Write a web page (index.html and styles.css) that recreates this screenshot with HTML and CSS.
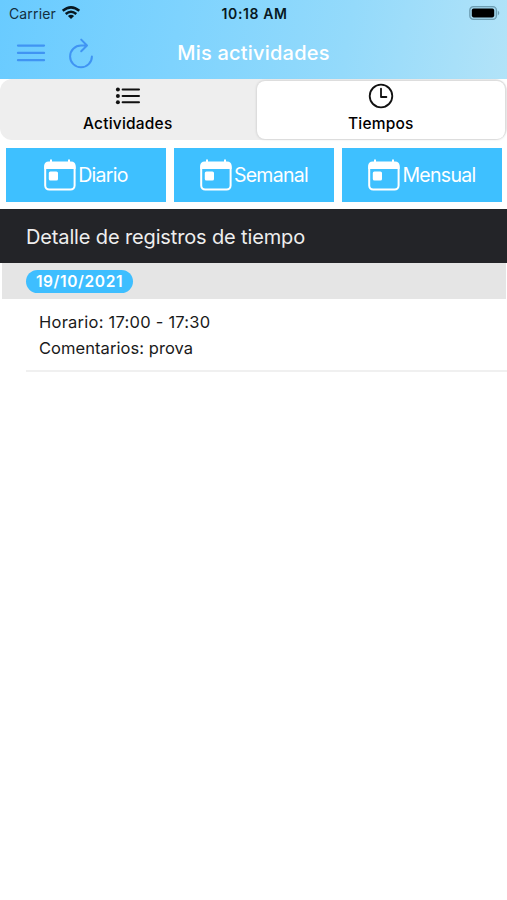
FILE: index.html
```html
<!DOCTYPE html>
<html lang="es">
<head>
<meta charset="utf-8">
<title>Mis actividades</title>
<link rel="stylesheet" href="styles.css">
</head>
<body>
<header class="header">
  <div class="status">
    <div class="carrier"><span>Carrier</span>
      <svg width="20" height="16" viewBox="0 0 20 16" fill="none" stroke="#081821" stroke-width="2.5"><path d="M1.7 5.8Q10 -1.1 18.3 5.8M4.7 9Q10 4.6 15.3 9"/><path d="M6.9 11Q10 8.6 13.1 11L10 14.1Z" fill="#081821" stroke="none"/></svg>
    </div>
    <span class="clock">10:18 AM</span>
    <svg class="battery" width="31" height="14" viewBox="0 0 31 14"><rect x=".8" y=".7" width="26.6" height="12.6" rx="3.6" fill="#a3d7ee" stroke="#6d9eb3" stroke-width="1.3"/><rect x="2.8" y="2.6" width="22.4" height="8.8" rx="1.8" fill="#000"/><path d="M28.8 4.6Q31.8 7 28.8 9.4Z" fill="#6d9eb3"/></svg>
  </div>
  <div class="nav">
    <div class="tools">
      <svg width="30" height="20" viewBox="0 0 30 20" stroke="#4094f3" stroke-width="2.3" stroke-linecap="round"><path d="M2 2.6H28M2 9.9H28M2 17.2H28"/></svg>
      <svg width="26" height="32" viewBox="0 0 26 32" fill="none" stroke="#4094f3" stroke-width="2" stroke-linecap="round" stroke-linejoin="round"><path d="M18.6 8.5H13A10.9 10.9 0 1 0 23.9 19.4M13.2 2.6L19 8.5L13.2 14.2"/></svg>
    </div>
    <h1 class="title">Mis actividades</h1>
  </div>
</header>
<nav class="tabs">
  <div class="tab">
    <svg width="26" height="26" viewBox="0 0 26 26" stroke="#111" stroke-width="2" stroke-linecap="round"><path d="M7.6 6.6H24M7.6 12.9H24M7.6 19.2H24"/><g fill="#111" stroke="none"><circle cx="2.9" cy="6.6" r="2"/><circle cx="2.9" cy="12.9" r="2"/><circle cx="2.9" cy="19.2" r="2"/></g></svg>
    <span class="label">Actividades</span>
  </div>
  <div class="tab active">
    <svg width="26" height="26" viewBox="0 0 26 26" fill="none" stroke="#111" stroke-width="1.8" stroke-linecap="round" stroke-linejoin="round"><circle cx="13" cy="13" r="11.3"/><path d="M13 5.7V14H18.4"/></svg>
    <span class="label">Tiempos</span>
  </div>
</nav>
<svg class="defs" width="0" height="0"><symbol id="cal" viewBox="0 0 32 32"><rect x="1.2" y="4.2" width="29.4" height="26.4" rx="4" fill="none" stroke="#fff" stroke-width="2"/><path d="M.2 10V7Q.2 2.4 4.8 2.4H6V.6H8V2.4H24V.6H26V2.4H27Q31.6 2.4 31.6 7V10Z" fill="#fff"/><rect x="4.8" y="12.4" width="9.2" height="9.2" rx="1.6" fill="#fff"/></symbol></svg>
<div class="buttons">
  <button class="btn"><svg width="32" height="32"><use href="#cal"/></svg><span>Diario</span></button>
  <button class="btn"><svg width="32" height="32"><use href="#cal"/></svg><span>Semanal</span></button>
  <button class="btn"><svg width="32" height="32"><use href="#cal"/></svg><span>Mensual</span></button>
</div>
<h2 class="heading">Detalle de registros de tiempo</h2>
<div class="date-row"><span class="badge">19/10/2021</span></div>
<div class="entry">
  <p class="hours">Horario: 17:00 - 17:30</p>
  <p class="comments">Comentarios: prova</p>
</div>
</body>
</html>
```
FILE: styles.css
```css
* { box-sizing: border-box; }
body { margin: 0; background: #fff; color: #1a1a1a; font-family: Inter, "Liberation Sans", sans-serif; min-height: 900px; white-space: nowrap; }
.header { height: 79px; background: linear-gradient(100deg, #69cbff 0%, #7ed3fe 35%, #94dafb 68%, #b2e3f8 100%); }
.status { height: 28px; display: grid; grid-template-columns: 1fr auto 1fr; align-items: center; padding: 0 7px 0 9px; font-size: 14px; line-height: 28px; color: #14303f; }
.carrier { display: flex; align-items: center; gap: 5px; letter-spacing: .14px; }
.carrier svg { margin-top: -2px; }
.clock { color: #081821; font-weight: 600; font-size: 14px; letter-spacing: .6px; }
.battery { justify-self: end; margin-top: -2px; }
.nav { height: 50px; display: grid; grid-template-columns: 1fr auto 1fr; align-items: center; padding: 0 16px; }
.tools { display: flex; align-items: center; gap: 22px; }
.title { margin: 0; color: #fff; font-size: 20px; font-weight: 500; letter-spacing: .2px; line-height: 50px; }
.tabs { height: 61px; background: #eee; border-radius: 12px; display: grid; grid-template-columns: 1fr 1fr; padding: 2px 2px 2px 0; }
.tab { display: flex; flex-direction: column; align-items: center; padding-top: 2px; margin-left: 3px; }
.active { background: #fff; border-radius: 8px; box-shadow: 0 0 3px #0003; margin-left: 4px; }
.label { font-size: 15.5px; line-height: 30px; font-weight: 500; letter-spacing: .2px; color: #000; }
.defs { position: absolute; }
.buttons { display: grid; grid-template-columns: repeat(3, 160px); gap: 8px; padding: 8px 6px 7px; height: 69px; }
.btn { border: 0; padding: 0; background: #3ec0ff; color: #fff; display: flex; align-items: center; justify-content: center; gap: 2px; font: 400 19.5px Inter, sans-serif; letter-spacing: -.7px; }
.heading { margin: 0; height: 54px; background: #232428; color: #eee; padding-left: 26px; font-size: 20px; line-height: 56px; font-weight: 400; letter-spacing: -.14px; }
.date-row { height: 36px; margin: 0 1px 0 2px; background: #e5e5e5; padding: 7px 24px; }
.badge { display: block; width: 107px; height: 23px; border-radius: 12px; background: #3ebeff; color: #fff; text-align: center; font-size: 15.5px; line-height: 24px; font-weight: 600; letter-spacing: .6px; }
.entry { height: 73px; margin-left: 26px; border-bottom: 2px solid #f0f0f0; padding: 10px 13px 0; font-size: 16.5px; line-height: 26px; }
.entry p { margin: 0; }
.hours { letter-spacing: .24px; }
.comments { letter-spacing: .06px; }
```
